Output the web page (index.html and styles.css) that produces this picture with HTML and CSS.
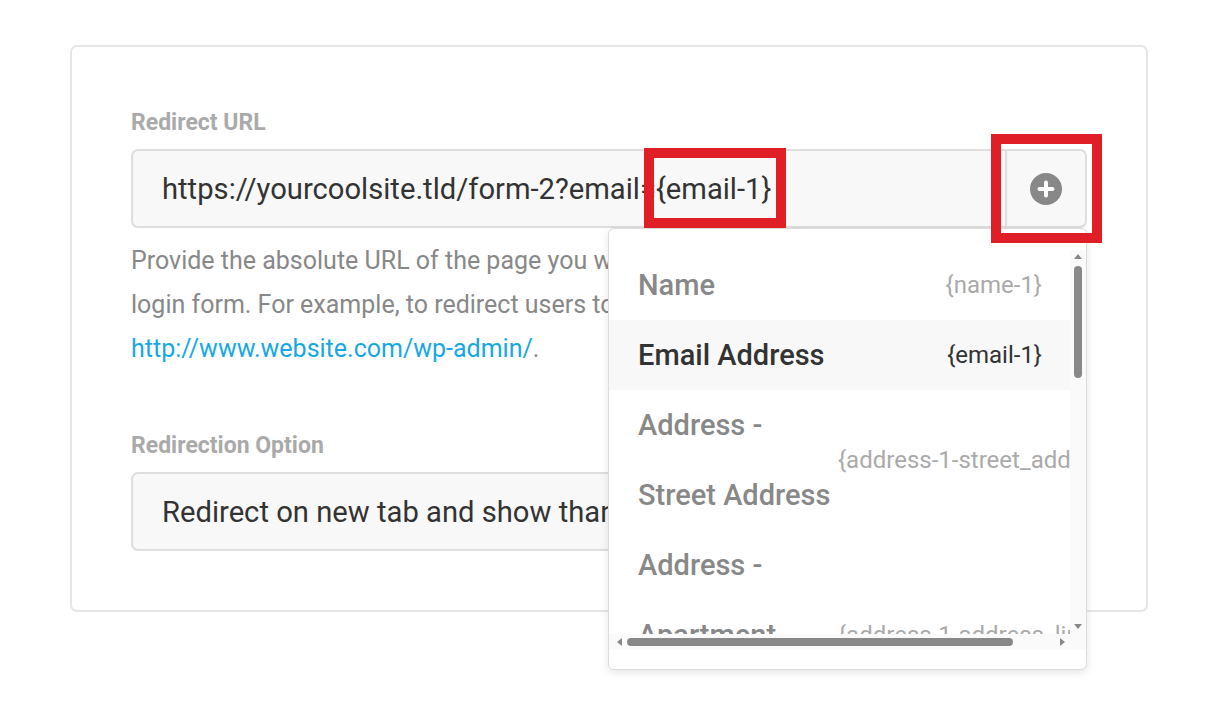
FILE: index.html
```html
<!DOCTYPE html>
<html lang="en">
<head>
<meta charset="utf-8">
<title>Redirect settings</title>
<link rel="stylesheet" href="styles.css">
</head>
<body>
  <section class="card">
    <div class="field">
      <label class="field-label">Redirect URL</label>
      <div class="url-input">
        <div class="url-text">https://yourcoolsite.tld/form-2?email={email-1}</div>
        <button class="insert-btn" type="button" aria-label="Insert field">
          <svg width="32" height="32" viewBox="0 0 32 32">
            <circle cx="16" cy="16" r="16" fill="#888"/>
            <path d="M16 9.5v13M9.5 16h13" stroke="#fff" stroke-width="4" stroke-linecap="round"/>
          </svg>
        </button>

        <span class="mark mark-token"></span>
        <span class="mark mark-button"></span>

        <div class="picker">
          <div class="picker-body">
            <div class="picker-viewport">
              <ul class="picker-list">
                <li class="picker-item"><span class="item-label">Name</span><span class="item-tag">{name-1}</span></li>
                <li class="picker-item is-active"><span class="item-label">Email Address</span><span class="item-tag">{email-1}</span></li>
                <li class="picker-item"><span class="item-label">Address - Street Address</span><span class="item-tag">{address-1-street_address}</span></li>
                <li class="picker-item"><span class="item-label">Address - Apartment, suite, etc</span><span class="item-tag">{address-1-address_line}</span></li>
                <li class="picker-item"><span class="item-label">Address - City</span><span class="item-tag">{address-1-city}</span></li>
              </ul>
            </div>
            <div class="vbar">
              <span class="arrow arrow-up"></span>
              <span class="vthumb"></span>
              <span class="arrow arrow-down"></span>
            </div>
            <div class="hbar">
              <span class="arrow arrow-left"></span>
              <span class="hthumb"></span>
              <span class="arrow arrow-right"></span>
            </div>
            <div class="corner"></div>
          </div>
        </div>
      </div>
      <p class="help">Provide the absolute URL of the page you want to redirect users to after using the login form. For example, to redirect users to the admin dashboard, use <a href="#">http://www.website.com/wp-admin/</a>.</p>
    </div>

    <div class="field field-option">
      <label class="field-label">Redirection Option</label>
      <div class="select-box">
        <span class="select-text">Redirect on new tab and show thank you message</span>
        <svg class="chevron" width="14" height="9" viewBox="0 0 14 9"><path d="M1 1l6 6 6-6" fill="none" stroke="#888" stroke-width="2"/></svg>
      </div>
    </div>
  </section>
</body>
</html>
```

FILE: styles.css
```css
* {
  box-sizing: border-box;
}

html {
  height: 100%;
}

html, body {
  margin: 0;
  background: #fff;
}

body {
  min-height: 100%;
  padding: 45px 72px 0 70px;
  font-family: Roboto, "Liberation Sans", sans-serif;
  color: #333;
}

.card {
  border: 2px solid #e6e6e6;
  border-radius: 7px;
  padding: 61px 59px 59px;
  height: 567px;
}

.field-label {
  display: block;
  font-size: 23px;
  font-weight: 700;
  line-height: 30px;
  color: #aaa;
  margin-bottom: 11px;
}

.url-input {
  position: relative;
  display: flex;
  height: 79px;
  background: #f8f8f8;
  border: 2px solid #dedede;
  border-radius: 7px;
}

.url-text {
  flex: 1;
  display: flex;
  align-items: center;
  padding-left: 29px;
  font-size: 29.2px;
  color: #333;
  white-space: nowrap;
}

.insert-btn {
  flex: 0 0 80px;
  display: flex;
  align-items: center;
  justify-content: center;
  border: 0;
  border-left: 2px solid #dedede;
  background: transparent;
  padding: 0;
}

/* red annotation frames */
.mark {
  position: absolute;
  border: 10px solid #e01e25;
  z-index: 3;
}

.mark-token {
  left: 511px;
  top: -3px;
  width: 142px;
  height: 80px;
}

.mark-button {
  left: 858px;
  top: -17px;
  width: 111px;
  height: 109px;
}

/* field picker dropdown */
.picker {
  position: absolute;
  left: 475px;
  top: 77px;
  width: 479px;
  height: 442px;
  padding: 21px 0 19px;
  background: #fff;
  border: 1px solid #dcdcdc;
  border-radius: 6px;
  box-shadow: 0 3px 9px rgba(0, 0, 0, 0.1);
  z-index: 2;
}

.picker-body {
  display: grid;
  grid-template-columns: minmax(0, 1fr) 16px;
  grid-template-rows: minmax(0, 1fr) 16px;
  height: 100%;
}

.picker-viewport {
  overflow: hidden;
}

.picker-list {
  list-style: none;
  margin: 0;
  padding: 0;
}

.picker-item {
  display: flex;
  align-items: center;
  padding: 0 28px 0 29px;
}

.picker-item.is-active {
  background: #f8f8f8;
}

.item-label {
  flex: 0 0 200px;
  font-size: 29px;
  font-weight: 500;
  line-height: 70px;
  color: #888;
}

.item-tag {
  flex: 1;
  min-width: 0;
  text-align: right;
  white-space: nowrap;
  font-size: 24px;
  color: #aaa;
}

.is-active .item-label,
.is-active .item-tag {
  color: #333;
}

.vbar {
  display: flex;
  flex-direction: column;
  align-items: center;
  padding: 4px 0 5px;
  background: #fafafa;
}

.vthumb {
  width: 8px;
  height: 112px;
  margin-top: 7px;
  border-radius: 4px;
  background: #888;
}

.arrow-down {
  margin-top: auto;
}

.hbar {
  display: flex;
  align-items: center;
  padding: 0 5px 0 8px;
  background: #fafafa;
}

.hthumb {
  width: 386px;
  height: 8px;
  margin-left: 5px;
  border-radius: 4px;
  background: #888;
}

.arrow-right {
  margin-left: auto;
}

.corner {
  background: #fafafa;
}

.arrow {
  width: 0;
  height: 0;
  border: 0 solid transparent;
}

.arrow-up {
  border-width: 0 4px 5px;
  border-bottom-color: #888;
}

.arrow-down {
  border-width: 5px 4px 0;
  border-top-color: #888;
}

.arrow-left {
  border-width: 4px 5px 4px 0;
  border-right-color: #888;
}

.arrow-right {
  border-width: 4px 0 4px 5px;
  border-left-color: #888;
}

.help {
  margin: 11px 0 0;
  font-size: 25px;
  line-height: 44px;
  color: #888;
}

.help a {
  color: #17a8e3;
  text-decoration: none;
  white-space: nowrap;
}

.field-option {
  margin-top: 60px;
}

.select-box {
  display: flex;
  align-items: center;
  justify-content: space-between;
  height: 79px;
  padding: 0 30px 0 29px;
  background: #f8f8f8;
  border: 2px solid #dedede;
  border-radius: 7px;
}

.select-text {
  font-size: 29.2px;
  color: #333;
}
```
